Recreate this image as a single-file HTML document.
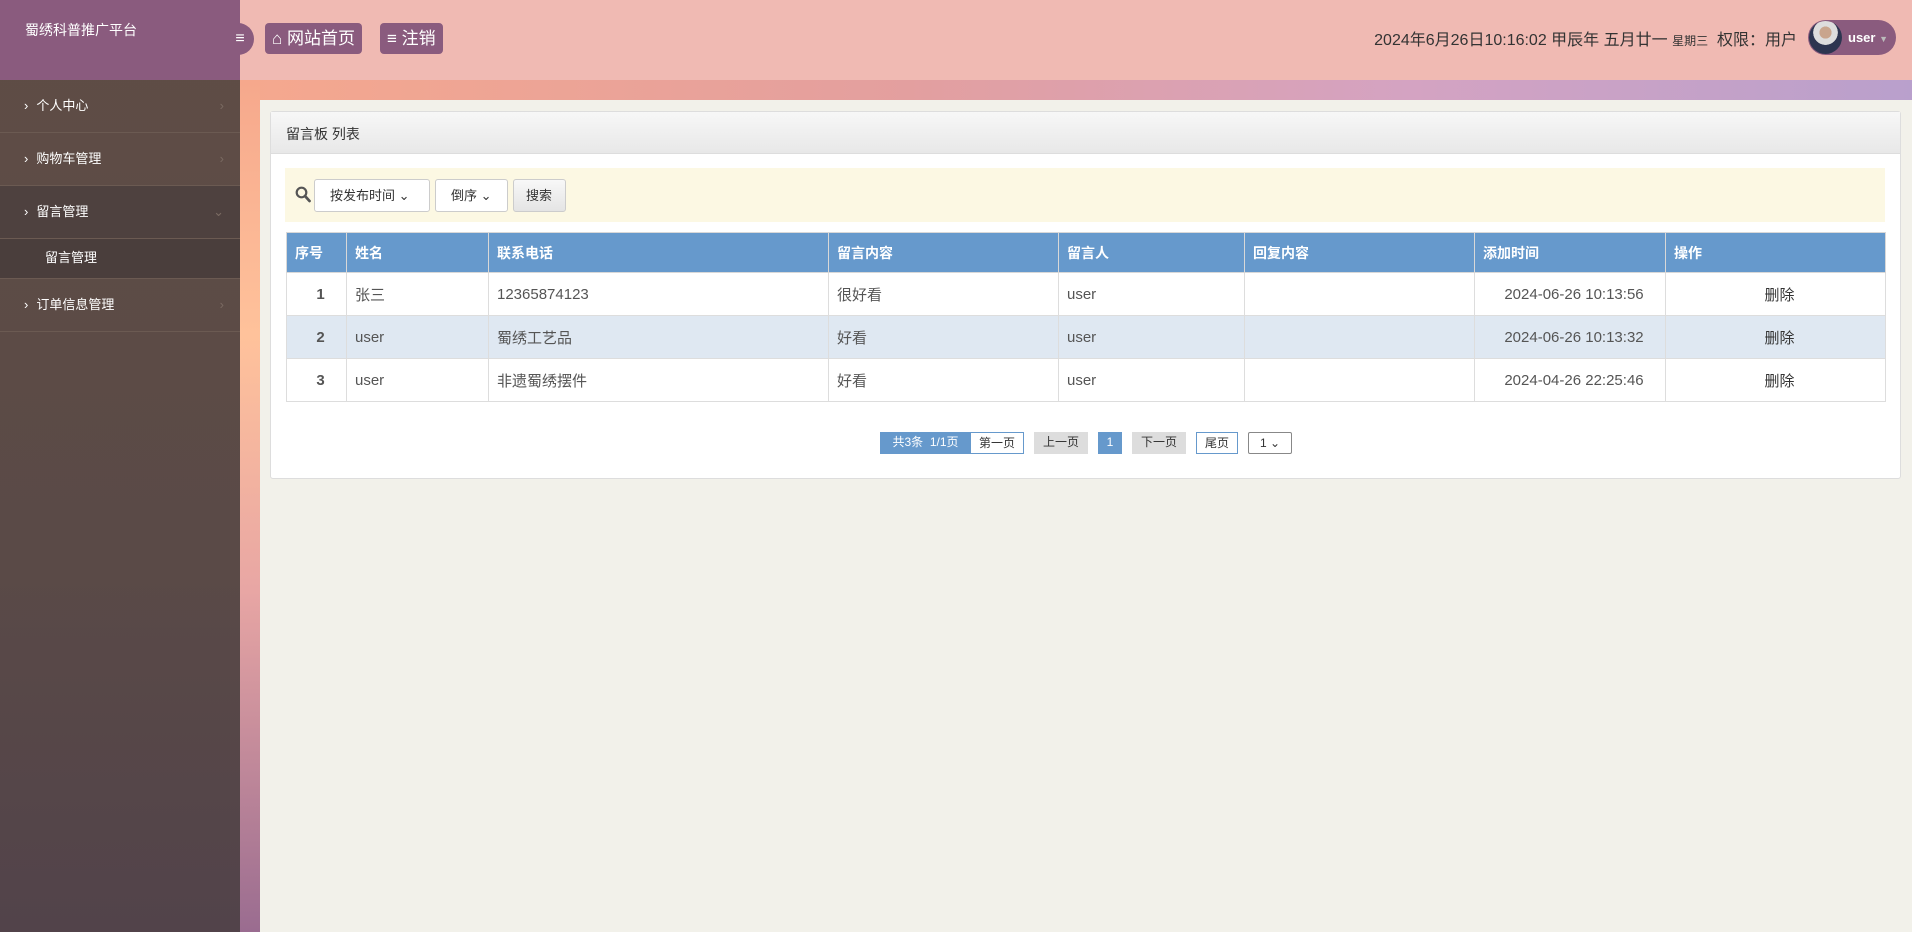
<!DOCTYPE html>
<html><head><meta charset="utf-8"><style>
*{box-sizing:border-box;margin:0;padding:0}
body{width:1912px;height:932px;overflow:hidden;font-family:"Liberation Sans","Noto Sans CJK SC",sans-serif;background:#f2f1ea;position:relative;color:#333}
.side{position:absolute;left:0;top:0;width:240px;height:932px;background:linear-gradient(#5f4d45,#5a4a47 60%,#52434a)}
.logo{height:80px;background:#8a5b7e;color:#fff;font-size:14px;padding:20px 0 0 25px}
.mi{height:53px;border-bottom:1px solid #6b5a52;color:#fff;font-size:13px;line-height:52px;padding-left:24px;position:relative}
.mi b{font-weight:normal;margin-right:8px}
.mi i{position:absolute;right:16px;top:0;color:#7a6a62;font-style:normal}
.act{background:#4e413f}
.sub{height:40px;background:#4a3e3c;color:#fff;font-size:13px;line-height:38px;padding-left:45px;border-bottom:1px solid #6b5a52}
.top{position:absolute;left:240px;top:0;right:0;height:80px;background:#f0bab3}
.band{position:absolute;left:240px;top:80px;right:0;height:20px;background:linear-gradient(90deg,#f5a88e,#e39f9f 40%,#d4a3c2 70%,#b9a0cc)}
.strip{position:absolute;left:240px;top:80px;width:20px;height:852px;background:linear-gradient(#f6a88c,#ffc29b 30%,#e8a6a4 60%,#9a6c90)}
.tog{position:absolute;left:226px;top:23px;width:28px;height:32px;border-radius:0 16px 16px 0;background:#8a5b7e;color:#fff;font-size:16px;text-align:center;line-height:32px}
.btn{position:absolute;top:23px;height:31px;background:#8a5b7e;color:#fff;border-radius:4px;font-size:17px;line-height:31px;padding:0 7px}
.rt{position:absolute;right:115px;top:26px;font-size:16px;color:#333}
.pill{position:absolute;left:1808px;top:20px;width:88px;height:35px;border-radius:18px;background:#8a5b7e;color:#fff;font-size:13px;font-weight:bold;line-height:35px;padding-left:40px}
.av{position:absolute;left:1px;top:1px;width:33px;height:33px;border-radius:50%;background:radial-gradient(circle at 50% 35%,#c9a58d 0 22%,#ddd 23% 45%,#2d3550 46%)}
.panel{position:absolute;left:270px;top:111px;width:1631px;height:368px;background:#fff;border:1px solid #ddd;border-radius:3px}
.ph{height:42px;background:linear-gradient(#f7f7f7,#e8e8e8);border-bottom:1px solid #ddd;font-size:14px;padding:12px 15px}
.filt{position:absolute;left:14px;top:56px;width:1600px;height:54px;background:#fcf8e3}
.sel{position:absolute;top:11px;height:33px;border:1px solid #ccc;border-radius:3px;background:#fff;font-size:13px;line-height:31px;padding-left:15px}
table{position:absolute;left:15px;top:120px;width:1600px;border-collapse:collapse;font-size:15px}
th{background:#6699cc;color:#fff;text-align:left;height:40px;padding-left:8px;font-size:14px;border:1px solid #d8d8d8}
td{height:43px;border:1px solid #ddd;padding-left:8px;color:#555}
tr.alt td{background:#dfe8f2}
.pg{position:absolute;top:320px;height:22px;font-size:12px;line-height:20px;text-align:center}
</style></head><body>
<div class="side">
<div class="logo">蜀绣科普推广平台</div>
<div class="mi"><b>›</b>个人中心<i>›</i></div>
<div class="mi"><b>›</b>购物车管理<i>›</i></div>
<div class="mi act"><b>›</b>留言管理<i>⌄</i></div>
<div class="sub">留言管理</div>
<div class="mi"><b>›</b>订单信息管理<i>›</i></div>
</div>
<div class="top"></div><div class="band"></div><div class="strip"></div>
<div class="tog">≡</div>
<div class="btn" style="left:265px">⌂ 网站首页</div>
<div class="btn" style="left:380px">≡ 注销</div>
<div class="rt">2024年6月26日10:16:02 甲辰年 五月廿一 <span style="font-size:12px">星期三</span>&nbsp; 权限：用户</div>
<div class="pill"><div class="av"></div>user <span style="color:#bbb;font-size:9px">▼</span></div>
<div class="panel">
<div class="ph">留言板 列表</div>
<div class="filt">
<svg style="position:absolute;left:10px;top:18px" width="16" height="17" viewBox="0 0 16 17"><circle cx="6.5" cy="6.5" r="4.8" fill="none" stroke="#555" stroke-width="2.2"/><path d="M10 10l4.5 5" stroke="#555" stroke-width="2.8" stroke-linecap="round"/></svg>
<div class="sel" style="left:29px;width:116px">按发布时间 ⌄</div>
<div class="sel" style="left:150px;width:73px">倒序 ⌄</div>
<div class="sel" style="left:228px;width:53px;background:linear-gradient(#f8f8f8,#e4e4e4);padding-left:12px">搜索</div>
</div>
<table>
<tr><th style="width:60px">序号</th><th style="width:142px">姓名</th><th style="width:340px">联系电话</th><th style="width:230px">留言内容</th><th style="width:186px">留言人</th><th style="width:230px">回复内容</th><th style="width:191px">添加时间</th><th>操作</th></tr>
<tr><td style="text-align:center;font-weight:bold">1</td><td>张三</td><td>12365874123</td><td>很好看</td><td>user</td><td></td><td style="text-align:center">2024-06-26 10:13:56</td><td style="text-align:center;color:#333">删除</td></tr>
<tr class="alt"><td style="text-align:center;font-weight:bold">2</td><td>user</td><td>蜀绣工艺品</td><td>好看</td><td>user</td><td></td><td style="text-align:center">2024-06-26 10:13:32</td><td style="text-align:center;color:#333">删除</td></tr>
<tr><td style="text-align:center;font-weight:bold">3</td><td>user</td><td>非遗蜀绣摆件</td><td>好看</td><td>user</td><td></td><td style="text-align:center">2024-04-26 22:25:46</td><td style="text-align:center;color:#333">删除</td></tr>
</table>
<div class="pg" style="left:609px;width:91px;background:#6699cc;color:#fff">共3条 &nbsp;1/1页</div>
<div class="pg" style="left:699px;width:54px;border:1px solid #6699cc">第一页</div>
<div class="pg" style="left:763px;width:54px;background:#ddd">上一页</div>
<div class="pg" style="left:827px;width:24px;background:#6699cc;color:#fff">1</div>
<div class="pg" style="left:861px;width:54px;background:#ddd">下一页</div>
<div class="pg" style="left:925px;width:42px;border:1px solid #6699cc">尾页</div>
<div class="pg" style="left:977px;width:44px;border:1px solid #888;border-radius:2px">1 ⌄</div>
</div>
</body></html>
